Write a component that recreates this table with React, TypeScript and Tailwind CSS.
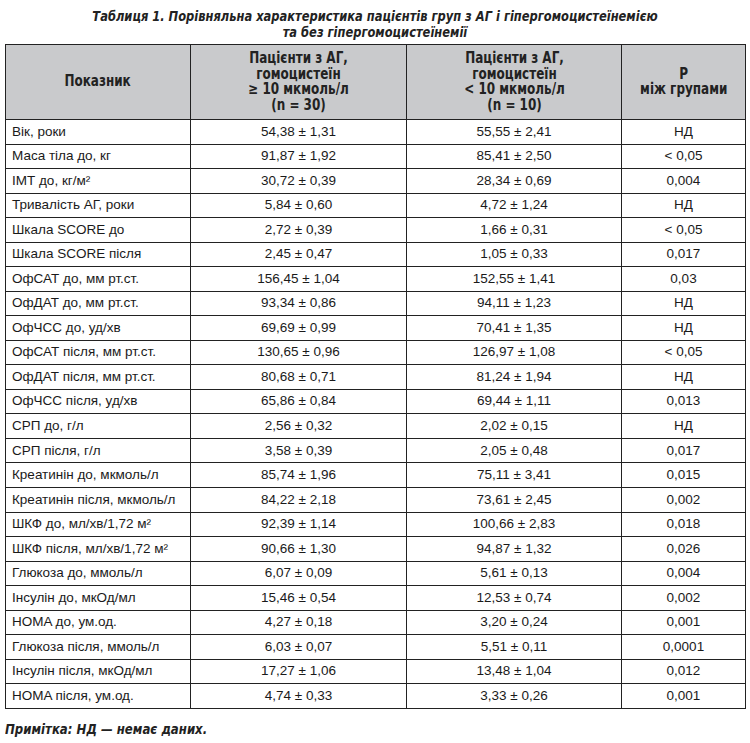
const rows: [string, string, string, string][] = [
  ["Вік, роки", "54,38 ± 1,31", "55,55 ± 2,41", "НД"],
  ["Маса тіла до, кг", "91,87 ± 1,92", "85,41 ± 2,50", "< 0,05"],
  ["ІМТ до, кг/м²", "30,72 ± 0,39", "28,34 ± 0,69", "0,004"],
  ["Тривалість АГ, роки", "5,84 ± 0,60", "4,72 ± 1,24", "НД"],
  ["Шкала SCORE до", "2,72 ± 0,39", "1,66 ± 0,31", "< 0,05"],
  ["Шкала SCORE після", "2,45 ± 0,47", "1,05 ± 0,33", "0,017"],
  ["ОфСАТ до, мм рт.ст.", "156,45 ± 1,04", "152,55 ± 1,41", "0,03"],
  ["ОфДАТ до, мм рт.ст.", "93,34 ± 0,86", "94,11 ± 1,23", "НД"],
  ["ОфЧСС до, уд/хв", "69,69 ± 0,99", "70,41 ± 1,35", "НД"],
  ["ОфСАТ після, мм рт.ст.", "130,65 ± 0,96", "126,97 ± 1,08", "< 0,05"],
  ["ОфДАТ після, мм рт.ст.", "80,68 ± 0,71", "81,24 ± 1,94", "НД"],
  ["ОфЧСС після, уд/хв", "65,86 ± 0,84", "69,44 ± 1,11", "0,013"],
  ["СРП до, г/л", "2,56 ± 0,32", "2,02 ± 0,15", "НД"],
  ["СРП після, г/л", "3,58 ± 0,39", "2,05 ± 0,48", "0,017"],
  ["Креатинін до, мкмоль/л", "85,74 ± 1,96", "75,11 ± 3,41", "0,015"],
  ["Креатинін після, мкмоль/л", "84,22 ± 2,18", "73,61 ± 2,45", "0,002"],
  ["ШКФ до, мл/хв/1,72 м²", "92,39 ± 1,14", "100,66 ± 2,83", "0,018"],
  ["ШКФ після, мл/хв/1,72 м²", "90,66 ± 1,30", "94,87 ± 1,32", "0,026"],
  ["Глюкоза до, ммоль/л", "6,07 ± 0,09", "5,61 ± 0,13", "0,004"],
  ["Інсулін до, мкОд/мл", "15,46 ± 0,54", "12,53 ± 0,74", "0,002"],
  ["HOMA до, ум.од.", "4,27 ± 0,18", "3,20 ± 0,24", "0,001"],
  ["Глюкоза після, ммоль/л", "6,03 ± 0,07", "5,51 ± 0,11", "0,0001"],
  ["Інсулін після, мкОд/мл", "17,27 ± 1,06", "13,48 ± 1,04", "0,012"],
  ["HOMA після, ум.од.", "4,74 ± 0,33", "3,33 ± 0,26", "0,001"],
];

// condensed face for the caption, header and note
const narrow = { fontFamily: '"DejaVu Sans Condensed", "Liberation Sans", sans-serif' };

export default function App() {
  return (
    <div className="w-[750px] h-[743px] bg-white text-[#1a1a1a] pt-[8px]" style={{ fontFamily: '"Liberation Sans", Arial, sans-serif' }}>
      <div className="text-center font-bold italic text-[14.5px] leading-[16px] text-[#222] scale-x-[0.88] origin-center whitespace-nowrap" style={narrow}>
        <p>Таблиця 1. Порівняльна характеристика пацієнтів груп з АГ і гіпергомоцистеїнемією</p>
        <p>та без гіпергомоцистеїнемії</p>
      </div>

      <table className="ml-[5px] mt-[4px] w-[740px] border-collapse table-fixed text-[13.5px]">
        <colgroup>
          <col className="w-[185px]" />
          <col className="w-[216px]" />
          <col className="w-[215px]" />
          <col className="w-[124px]" />
        </colgroup>
        <thead>
          <tr className="h-[75px] bg-[#c9cacc] text-[15.5px] leading-[15.5px] text-[#222]" style={narrow}>
            <th className="border border-[#222] font-bold">
              <span className="inline-block scale-x-[0.86]">Показник</span>
            </th>
            <th className="border border-[#222] font-bold">
              <span className="inline-block scale-x-[0.86]">
                Пацієнти з АГ,<br />гомоцистеїн<br />≥ 10 мкмоль/л<br />(n = 30)
              </span>
            </th>
            <th className="border border-[#222] font-bold">
              <span className="inline-block scale-x-[0.86]">
                Пацієнти з АГ,<br />гомоцистеїн<br />&lt; 10 мкмоль/л<br />(n = 10)
              </span>
            </th>
            <th className="border border-[#222] font-bold">
              <span className="inline-block scale-x-[0.86]">
                P<br />між групами
              </span>
            </th>
          </tr>
        </thead>
        <tbody>
          {rows.map((r) => (
            <tr key={r[0]} className="h-[24.54px]">
              <td className="border border-[#222] p-0 pl-[6px]">{r[0]}</td>
              <td className="border border-[#222] text-center p-0">{r[1]}</td>
              <td className="border border-[#222] text-center p-0">{r[2]}</td>
              <td className="border border-[#222] text-center p-0">{r[3]}</td>
            </tr>
          ))}
        </tbody>
      </table>

      <p className="ml-[5px] mt-[12px] font-bold italic text-[14.5px] leading-[16px] text-[#222] scale-x-[0.9] origin-left whitespace-nowrap" style={narrow}>
        Примітка: НД — немає даних.
      </p>
    </div>
  );
}
